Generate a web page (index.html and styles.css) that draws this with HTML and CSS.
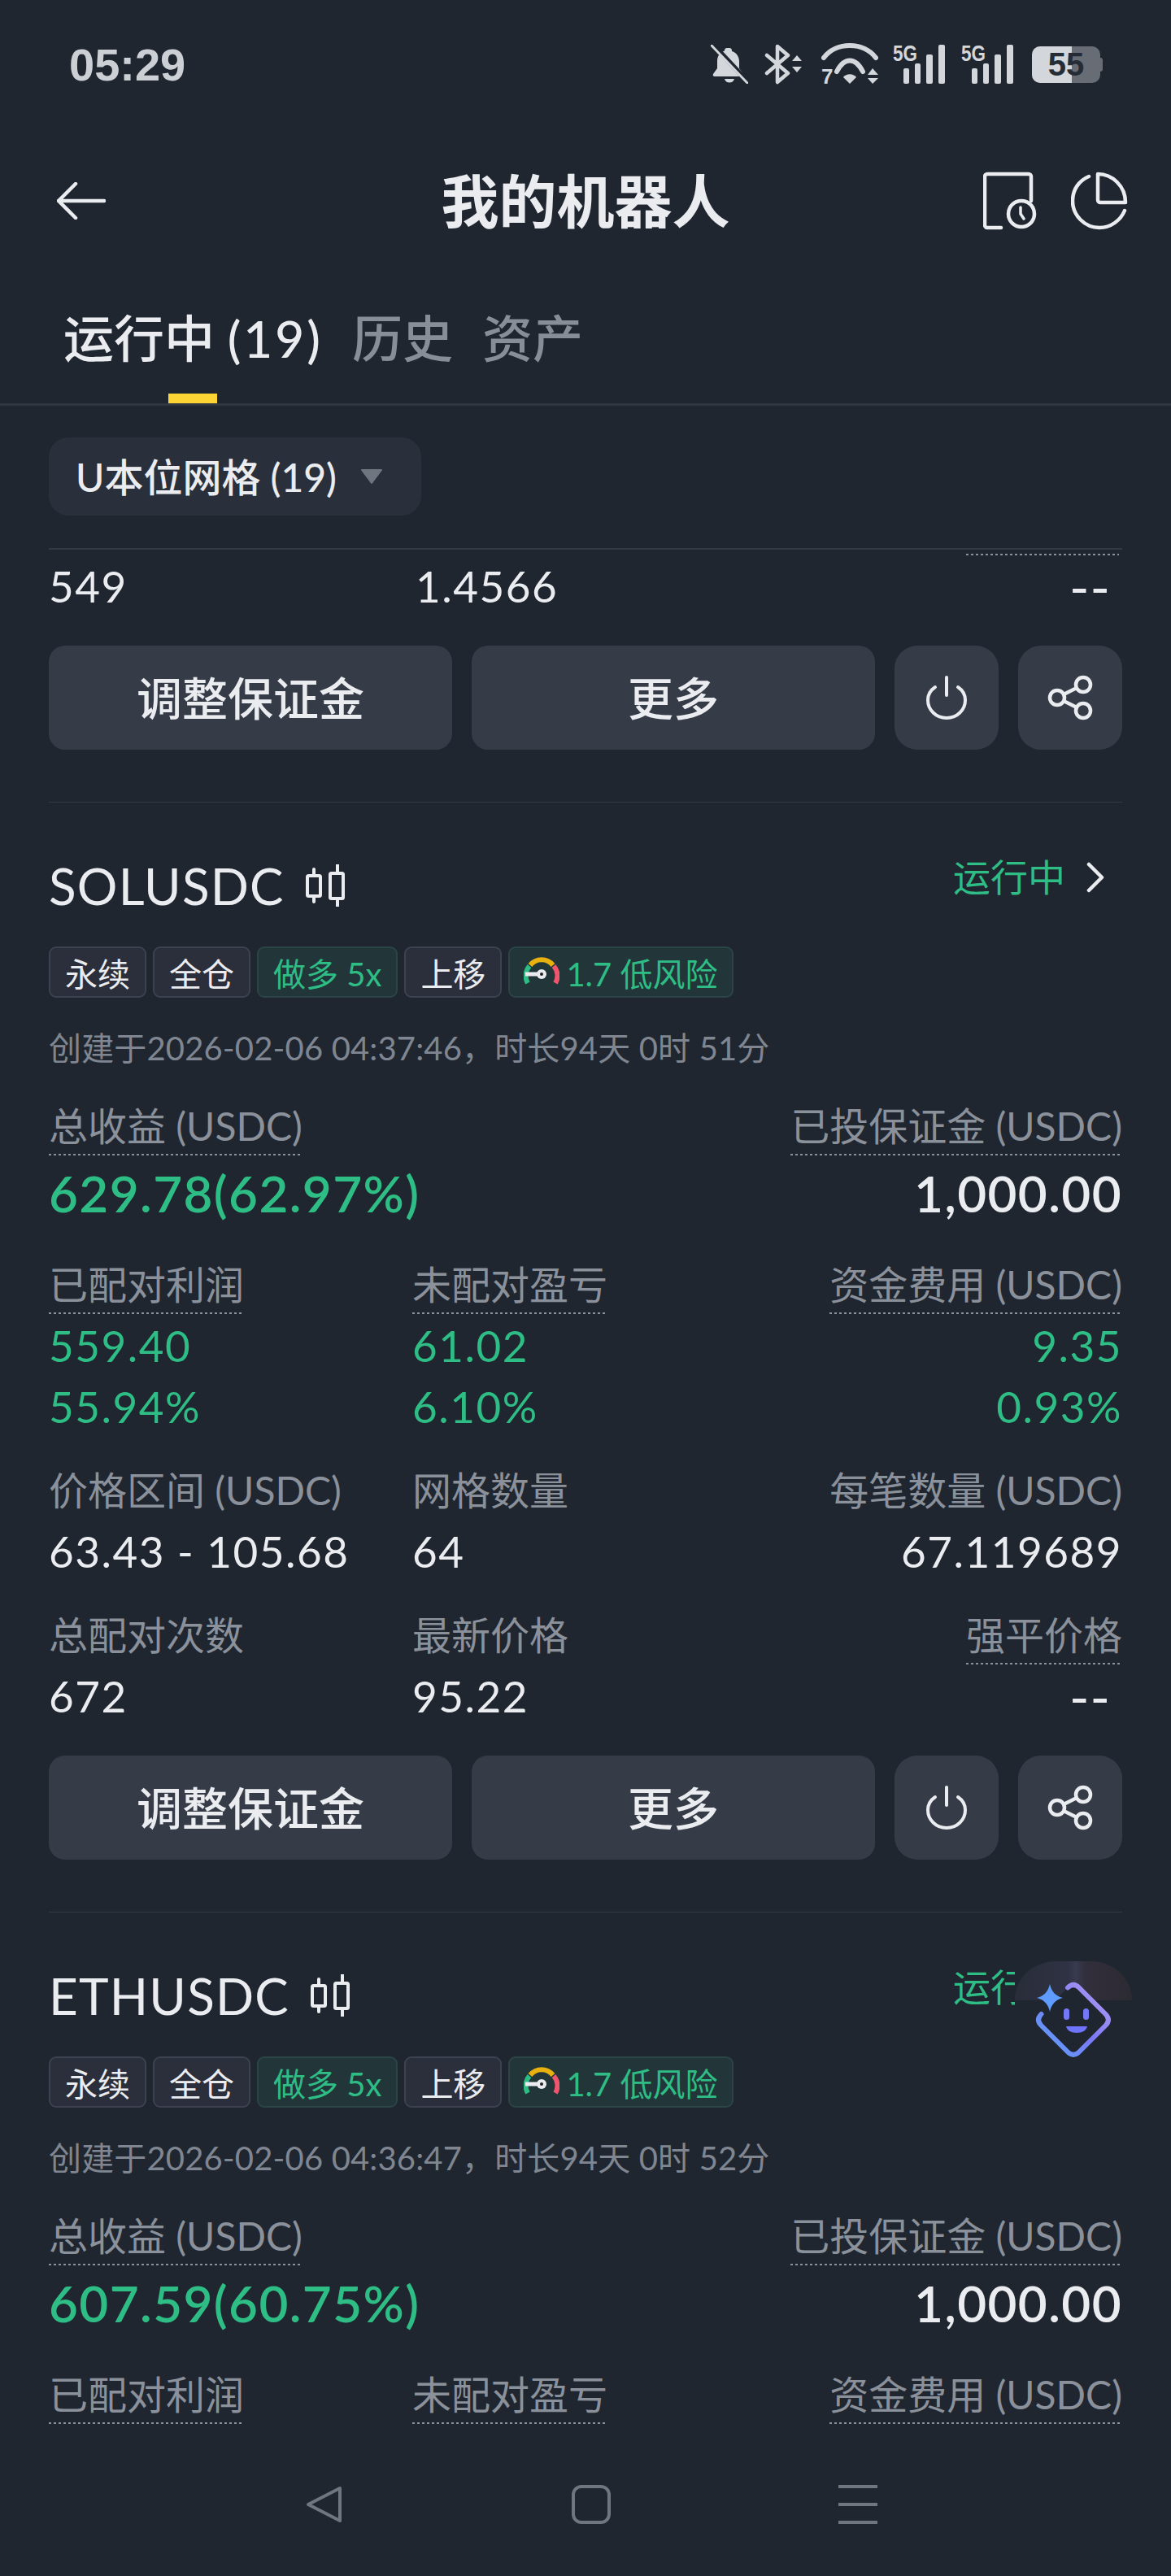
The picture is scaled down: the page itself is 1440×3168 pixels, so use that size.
FILE: index.html
```html
<!DOCTYPE html>
<html lang="zh">
<head>
<meta charset="utf-8">
<title>我的机器人</title>
<link rel="stylesheet" href="styles.css">
</head>
<body>
<div class="app">
  <div class="statusbar">
    <span class="time">05:29</span>
    <div class="sys-icons">
      <svg class="ic-bell" width="46" height="48" viewBox="0 0 46 48"><path d="M23 4c1.700 0 3 1.300 3 3v1c6 1.800 9 7 9 13v8l5 7c.8 1.300 0 3-1.600 3H4.600c-1.600 0-2.400-1.700-1.600-3l5-7v-9c0-6 3.500-11 9-12.500V7c0-1.700 1.300-3 3-3z" fill="#d3d6da"/><path d="M17 42h12c-.8 3-3 4.500-6 4.500s-5.200-1.500-6-4.500z" fill="#d3d6da"/><path d="M3 0l43 46" stroke="#1f2630" stroke-width="6"/><path d="M1 1l44 46" stroke="#d3d6da" stroke-width="3" stroke-linecap="round"/></svg>
      <svg class="ic-bt" width="48" height="50" viewBox="0 0 48 50"><path d="M3 14l26 22-13 11V3l13 11L3 36" fill="none" stroke="#d3d6da" stroke-width="4.500" stroke-linejoin="round" stroke-linecap="round"/><path d="M34 21l6-7 6 7zM34 28l6 7 6-7z" fill="#d3d6da"/></svg>
      <svg class="ic-wifi" width="70" height="62" viewBox="0 -6 70 62"><path d="M3 17C18-3 52-3 67 17" fill="none" stroke="#d3d6da" stroke-width="6" stroke-linecap="round"/><path d="M19 34C28 16 42 16 51 34" fill="none" stroke="#d3d6da" stroke-width="6" stroke-linecap="round"/><path d="M27 41c4-5 12-5 16 0l-8 8z" fill="#d3d6da"/><text class="wifi-7" x="0" y="49">7</text><path d="M57 38l6-8 7 8zM57 42l6 7 7-7z" fill="#d3d6da"/></svg>
      <svg class="ic-sig" width="64" height="62" viewBox="0 -6 64 62"><text class="sig-5g" x="0" y="21" textLength="30" lengthAdjust="spacingAndGlyphs">5G</text><rect x="13" y="30" width="7" height="19" rx="2"/><rect x="27" y="24" width="7" height="25" rx="2"/><rect x="41" y="13" width="8" height="36" rx="2"/><rect x="56" y="1" width="8" height="48" rx="2"/></svg>
      <svg class="ic-sig" width="64" height="62" viewBox="0 -6 64 62"><text class="sig-5g" x="0" y="21" textLength="30" lengthAdjust="spacingAndGlyphs">5G</text><rect x="13" y="30" width="7" height="19" rx="2"/><rect x="27" y="24" width="7" height="25" rx="2"/><rect x="41" y="13" width="8" height="36" rx="2"/><rect x="56" y="1" width="8" height="48" rx="2"/></svg>
      <div class="battery"><span class="battery-fill"></span><span class="battery-num">55</span><span class="battery-nub"></span></div>
    </div>
  </div>

  <header class="topbar">
    <svg class="ic-back" width="60" height="46" viewBox="0 0 60 46"><path d="M23 2L2 23l21 21M2 23h56" fill="none" stroke="#eaecf0" stroke-width="4.500" stroke-linecap="round" stroke-linejoin="round"/></svg>
    <h1 class="title">我的机器人</h1>
    <div class="top-actions">
      <svg width="66" height="72" viewBox="0 0 66 72"><path d="M22 69H5c-1.500 0-3-1.500-3-3V6c0-1.500 1.500-3 3-3h51c1.500 0 3 1.500 3 3v30" fill="none" stroke="#eaecf0" stroke-width="4.500" stroke-linecap="round"/><circle cx="47" cy="52" r="16" fill="none" stroke="#eaecf0" stroke-width="4.500"/><path d="M46 44v8l4 6" fill="none" stroke="#eaecf0" stroke-width="3.500" stroke-linecap="round"/></svg>
      <svg width="70" height="72" viewBox="0 0 70 72"><path d="M22 6C10 11 2 22 2 36c0 18 15 33 33 33 14 0 26-9 31-21" fill="none" stroke="#eaecf0" stroke-width="4.500" stroke-linecap="round"/><path d="M33 3c18 0 34 15 34 35H36c-1.500 0-3-1.500-3-3z" fill="none" stroke="#eaecf0" stroke-width="4.500" stroke-linejoin="round"/></svg>
    </div>
  </header>

  <nav class="tabs">
    <span class="tab tab-active">运行中 <span class="tab-count">(19)</span><i class="tab-bar"></i></span>
    <span class="tab">历史</span>
    <span class="tab">资产</span>
  </nav>

  <div class="filter">
    <div class="pill"><span class="pill-text">U本位网格 (19)</span><svg width="30" height="20" viewBox="0 0 30 20"><path d="M3 2h24l-12 16z" fill="#6f7680" stroke="#6f7680" stroke-width="2" stroke-linejoin="round"/></svg></div>
  </div>

  <main class="list">
    <section class="card card-partial">
      <div class="grid partial-row">
        <div class="val">549</div>
        <div class="val val-nudge">1.4566</div>
        <div class="cell-right"><div class="partial-dots"></div><div class="val val-dash">--</div></div>
      </div>
      <div class="actions">
        <button class="btn btn-text">调整保证金</button>
        <button class="btn btn-text">更多</button>
        <button class="btn btn-ic"><svg width="50" height="54" viewBox="0 0 50 54"><path d="M25 2v22" fill="none" stroke="#eaecf0" stroke-width="4" stroke-linecap="round"/><path d="M11 14C5 18 2 24 2 30c0 12 10 22 23 22s23-10 23-22c0-6-3-12-9-16" fill="none" stroke="#eaecf0" stroke-width="4" stroke-linecap="round"/></svg></button>
        <button class="btn btn-ic"><svg width="56" height="56" viewBox="0 0 56 56"><circle cx="12" cy="28" r="9" fill="none" stroke="#eaecf0" stroke-width="4.500"/><circle cx="44" cy="12" r="9" fill="none" stroke="#eaecf0" stroke-width="4.500"/><circle cx="44" cy="44" r="9" fill="none" stroke="#eaecf0" stroke-width="4.500"/><path d="M20 24l16-8M20 32l16 8" stroke="#eaecf0" stroke-width="4.500"/></svg></button>
      </div>
    </section>

    <section class="card">
      <div class="card-head">
        <div class="symbol">SOLUSDC<svg class="candle" width="48" height="52" viewBox="0 0 48 52"><path d="M10 6v8M10 39v7M39 0v11M39 42v10" stroke="#eaecf0" stroke-width="4" stroke-linecap="round"/><rect x="2" y="14" width="16" height="25" fill="none" stroke="#eaecf0" stroke-width="4" rx="1.500"/><rect x="30" y="11" width="16" height="31" fill="none" stroke="#eaecf0" stroke-width="4" rx="1.500"/></svg></div>
        <div class="state">运行中<svg width="22" height="38" viewBox="0 0 22 38"><path d="M3 3l16 16L3 35" fill="none" stroke="#eaecf0" stroke-width="4.500" stroke-linecap="round" stroke-linejoin="round"/></svg></div>
      </div>
      <div class="tags">
        <span class="tag">永续</span><span class="tag">全仓</span><span class="tag tag-g">做多 5x</span><span class="tag">上移</span>
        <span class="tag tag-g tag-risk"><svg width="44" height="38" viewBox="0 0 44 38"><path d="M5 32A18 18 0 0 1 7 11" fill="none" stroke="#2ebd85" stroke-width="6"/><path d="M8 10A18 18 0 0 1 36 10" fill="none" stroke="#e9b10f" stroke-width="6"/><path d="M37 11A18 18 0 0 1 39 32" fill="none" stroke="#f0556d" stroke-width="6"/><path d="M2 21h20" stroke="#eaecf0" stroke-width="5"/><circle cx="22" cy="21" r="6" fill="#eaecf0"/><circle cx="22" cy="21" r="2" fill="#222"/></svg>1.7 低风险</span>
      </div>
      <div class="created">创建于2026-02-06 04:37:46，时长94天 0时 51分</div>
      <div class="summary">
        <div><span class="lab">总收益 (USDC)</span><div class="big big-g">629.78(62.97%)</div></div>
        <div class="right"><span class="lab">已投保证金 (USDC)</span><div class="big">1,000.00</div></div>
      </div>
      <div class="grid row-a">
        <div><span class="lab">已配对利润</span><div class="val g">559.40</div><div class="val g">55.94%</div></div>
        <div><span class="lab">未配对盈亏</span><div class="val g">61.02</div><div class="val g">6.10%</div></div>
        <div class="right"><span class="lab">资金费用 (USDC)</span><div class="val g">9.35</div><div class="val g">0.93%</div></div>
      </div>
      <div class="grid row-b">
        <div><span class="lab lab-plain">价格区间 (USDC)</span><div class="val">63.43 - 105.68</div></div>
        <div><span class="lab lab-plain">网格数量</span><div class="val">64</div></div>
        <div class="right"><span class="lab lab-plain">每笔数量 (USDC)</span><div class="val">67.119689</div></div>
      </div>
      <div class="grid row-b">
        <div><span class="lab lab-plain">总配对次数</span><div class="val">672</div></div>
        <div><span class="lab lab-plain">最新价格</span><div class="val">95.22</div></div>
        <div class="right"><span class="lab">强平价格</span><div class="val val-dash">--</div></div>
      </div>
      <div class="actions">
        <button class="btn btn-text">调整保证金</button>
        <button class="btn btn-text">更多</button>
        <button class="btn btn-ic"><svg width="50" height="54" viewBox="0 0 50 54"><path d="M25 2v22" fill="none" stroke="#eaecf0" stroke-width="4" stroke-linecap="round"/><path d="M11 14C5 18 2 24 2 30c0 12 10 22 23 22s23-10 23-22c0-6-3-12-9-16" fill="none" stroke="#eaecf0" stroke-width="4" stroke-linecap="round"/></svg></button>
        <button class="btn btn-ic"><svg width="56" height="56" viewBox="0 0 56 56"><circle cx="12" cy="28" r="9" fill="none" stroke="#eaecf0" stroke-width="4.500"/><circle cx="44" cy="12" r="9" fill="none" stroke="#eaecf0" stroke-width="4.500"/><circle cx="44" cy="44" r="9" fill="none" stroke="#eaecf0" stroke-width="4.500"/><path d="M20 24l16-8M20 32l16 8" stroke="#eaecf0" stroke-width="4.500"/></svg></button>
      </div>
    </section>

    <section class="card">
      <div class="card-head">
        <div class="symbol">ETHUSDC<svg class="candle" width="48" height="52" viewBox="0 0 48 52"><path d="M10 6v8M10 39v7M39 0v11M39 42v10" stroke="#eaecf0" stroke-width="4" stroke-linecap="round"/><rect x="2" y="14" width="16" height="25" fill="none" stroke="#eaecf0" stroke-width="4" rx="1.500"/><rect x="30" y="11" width="16" height="31" fill="none" stroke="#eaecf0" stroke-width="4" rx="1.500"/></svg></div>
        <div class="state">运行中<svg width="22" height="38" viewBox="0 0 22 38"><path d="M3 3l16 16L3 35" fill="none" stroke="#eaecf0" stroke-width="4.500" stroke-linecap="round" stroke-linejoin="round"/></svg></div>
      </div>
      <div class="tags">
        <span class="tag">永续</span><span class="tag">全仓</span><span class="tag tag-g">做多 5x</span><span class="tag">上移</span>
        <span class="tag tag-g tag-risk"><svg width="44" height="38" viewBox="0 0 44 38"><path d="M5 32A18 18 0 0 1 7 11" fill="none" stroke="#2ebd85" stroke-width="6"/><path d="M8 10A18 18 0 0 1 36 10" fill="none" stroke="#e9b10f" stroke-width="6"/><path d="M37 11A18 18 0 0 1 39 32" fill="none" stroke="#f0556d" stroke-width="6"/><path d="M2 21h20" stroke="#eaecf0" stroke-width="5"/><circle cx="22" cy="21" r="6" fill="#eaecf0"/><circle cx="22" cy="21" r="2" fill="#222"/></svg>1.7 低风险</span>
      </div>
      <div class="created">创建于2026-02-06 04:36:47，时长94天 0时 52分</div>
      <div class="summary">
        <div><span class="lab">总收益 (USDC)</span><div class="big big-g">607.59(60.75%)</div></div>
        <div class="right"><span class="lab">已投保证金 (USDC)</span><div class="big">1,000.00</div></div>
      </div>
      <div class="grid row-a">
        <div><span class="lab">已配对利润</span></div>
        <div><span class="lab">未配对盈亏</span></div>
        <div class="right"><span class="lab">资金费用 (USDC)</span></div>
      </div>
    </section>
  </main>

  <footer class="navbar">
    <svg width="48" height="48" viewBox="0 0 48 48"><path d="M43 4L4 24l39 20z" fill="none" stroke="#6f7680" stroke-width="4" stroke-linejoin="round"/></svg>
    <svg width="48" height="48" viewBox="0 0 48 48"><rect x="2" y="2" width="44" height="44" rx="10" fill="none" stroke="#6f7680" stroke-width="4"/></svg>
    <svg width="48" height="48" viewBox="0 0 48 48"><path d="M0 2h48M0 24h48M0 46h48" stroke="#6f7680" stroke-width="4"/></svg>
  </footer>

  <svg class="assistant" width="144" height="128" viewBox="0 0 144 128">
    <defs>
      <linearGradient id="hat" x1="0" x2="1" y1="0" y2="0"><stop offset="0" stop-color="#292d39"/><stop offset=".45" stop-color="#2f3243"/><stop offset=".52" stop-color="#383a50"/><stop offset=".6" stop-color="#322f3c"/><stop offset="1" stop-color="#2c2a31"/></linearGradient>
      <linearGradient id="ring" x1="0" x2="1" y1="1" y2="0"><stop offset="0" stop-color="#58a6f8"/><stop offset=".5" stop-color="#7b78f6"/><stop offset="1" stop-color="#b8a0f2"/></linearGradient>
    </defs>
    <rect x="0" y="0" width="144" height="128" fill="#1f2630"/>
    <path d="M0 48C0 20 24 0 50 0h44c26 0 50 20 50 48H0z" fill="url(#hat)"/>
    <path d="M65 32.500Q72 25.500 79 32.500L111.500 65Q118.500 72 111.500 79L79 111.500Q72 118.500 65 111.500L32.500 79Q25.500 72 32.500 65z" fill="#1f2630"/>
    <path d="M65 32.500Q72 25.500 79 32.500L111.500 65Q118.500 72 111.500 79L79 111.500Q72 118.500 65 111.500L32.500 79Q25.500 72 32.500 65" fill="none" stroke="url(#ring)" stroke-width="6" stroke-linecap="round"/>
    <path d="M43 28c2 9 7 15 16 17-9 2-14 8-16 17-2-9-7-15-16-17 9-2 14-8 16-17z" fill="#5e9cff"/>
    <rect x="60" y="58" width="7" height="14" rx="3.500" fill="#7478f8"/>
    <rect x="84" y="58" width="7" height="14" rx="3.500" fill="#7478f8"/>
    <path d="M63 80h26c-1 5-6 8-13 8s-12-3-13-8z" fill="#6f74fa"/>
  </svg>
</div>
</body>
</html>
```

FILE: styles.css
```css
* { box-sizing: border-box; }
html, body { margin: 0; padding: 0; background: #1f2630; }
body {
  font-family: Lato, "Noto Sans CJK SC", sans-serif;
  color: #eaecf0;
}
.app {
  position: relative;
  width: 1440px;
  height: 3168px;
  display: flex;
  flex-direction: column;
  overflow: hidden;
  background: #1f2630;
}

/* status bar */
.statusbar {
  height: 158px;
  flex: none;
  display: flex;
  align-items: center;
  justify-content: space-between;
  padding: 0 87px 0 85px;
}
.time {
  font-family: "Liberation Sans", sans-serif;
  font-size: 56px;
  font-weight: 700;
  color: #ccd0d5;
}
.sys-icons { display: flex; align-items: center; gap: 20px; }
.sys-icons svg { display: block; }
.ic-bt { margin-right: 2px; }
.ic-wifi { margin-right: -2px; }
.ic-sig rect { fill: #d3d6da; }
.sig-5g {
  font-family: "Liberation Sans", sans-serif;
  font-weight: 700;
  font-size: 28px;
  fill: #d3d6da;
}
.wifi-7 {
  font-family: "Liberation Sans", sans-serif;
  font-size: 26px;
  font-weight: 700;
  fill: #d3d6da;
}
.battery {
  position: relative;
  width: 84px;
  height: 45px;
  display: flex;
  align-items: center;
  justify-content: center;
  background: #686d75;
  border-radius: 10px;
  margin-left: 3px;
}
.battery-fill {
  position: absolute;
  left: 0;
  top: 0;
  bottom: 0;
  width: 49px;
  background: #d3d6da;
  border-radius: 10px 0 0 10px;
}
.battery-num {
  position: relative;
  font-family: "Liberation Sans", sans-serif;
  font-weight: 700;
  font-size: 40px;
  line-height: 45px;
  color: #262c35;
}
.battery-nub {
  position: absolute;
  right: -3px;
  top: 14px;
  width: 3px;
  height: 17px;
  background: #686d75;
  border-radius: 0 3px 3px 0;
}

/* top bar */
.topbar {
  position: relative;
  flex: none;
  height: 178px;
  display: flex;
  align-items: center;
  justify-content: space-between;
  padding: 0 53px 0 70px;
}
.title {
  position: absolute;
  left: 0;
  right: 0;
  margin: 0;
  text-align: center;
  font-size: 71px;
  font-weight: 700;
  line-height: 80px;
  color: #eaecf0;
  pointer-events: none;
}
.top-actions { display: flex; align-items: center; gap: 42px; }

/* tabs */
.tabs {
  flex: none;
  height: 163px;
  display: flex;
  gap: 36px;
  padding: 40px 0 0 78px;
  border-bottom: 3px solid #2f3640;
}
.tab {
  position: relative;
  font-size: 62px;
  font-weight: 500;
  line-height: 80px;
  height: 120px;
  color: #878e98;
}
.tab-count { letter-spacing: 3px; }
.tab-active { color: #eaecf0; }
.tab-bar {
  position: absolute;
  left: 129px;
  bottom: 0;
  width: 60px;
  height: 12px;
  background: #fcd535;
}

/* filter */
.filter { flex: none; height: 175px; padding: 39px 60px 0; }
.pill {
  width: 458px;
  height: 96px;
  border-radius: 24px;
  background: #2a303b;
  display: flex;
  align-items: center;
  gap: 28px;
  padding-left: 33px;
  font-size: 48px;
  font-weight: 500;
}
.pill-text { margin-bottom: 5px; }

/* list */
.list { flex: 1 1 0; min-height: 0; overflow: hidden; padding: 0 60px; }
.list > .card:first-child { border-top: 2px solid #333a45; }
.card { border-bottom: 1px solid #333a45; padding-bottom: 64px; }
.grid {
  display: grid;
  grid-template-columns: 447px 1fr auto;
}
.partial-row { height: 118px; }
.partial-row .val { padding-top: 7px; }
.cell-right { text-align: right; }
.partial-dots {
  width: 188px;
  height: 2px;
  margin: 5px 4px 0 auto;
  background: repeating-linear-gradient(90deg, #8b919b 0 3px, transparent 3px 6px);
}
.partial-row .val-dash { padding-top: 0; }
.val-nudge { margin-left: 4px; }

.val { font-size: 53px; line-height: 75px; letter-spacing: 1.500px; }
.val.g { color: #2ebd85; }
.val-dash { font-size: 66px; padding-right: 14px; letter-spacing: 1px; }
.g { color: #2ebd85; }
.right { text-align: right; }

.actions {
  display: grid;
  grid-template-columns: 496px 496px 128px 128px;
  gap: 24px;
}
.btn {
  height: 128px;
  border: 0;
  border-radius: 20px;
  background: #353c48;
  color: #eaecf0;
  font-family: inherit;
  font-size: 56px;
  font-weight: 500;
  display: flex;
  align-items: center;
  justify-content: center;
  padding: 0;
}
.btn-text { padding-bottom: 6px; }
.btn-ic { border-radius: 28px; }

.card-head {
  display: flex;
  justify-content: space-between;
  align-items: flex-start;
  padding: 72px 22px 0 0;
}
.symbol {
  display: flex;
  align-items: center;
  gap: 26px;
  font-size: 62px;
  line-height: 60px;
  height: 60px;
  letter-spacing: 1.200px;
}
.state {
  display: flex;
  align-items: center;
  gap: 26px;
  font-size: 46px;
  line-height: 40px;
  color: #2ebd85;
}
.tags { display: flex; gap: 8px; margin-top: 45px; height: 63px; }
.tag {
  display: flex;
  align-items: center;
  height: 63px;
  padding: 0 18px;
  border: 2px solid #3c424f;
  border-radius: 9px;
  background: #2a2f3b;
  font-size: 40px;
}
.tag-g { color: #2ebd85; background: #22363a; border-color: #2b4446; }
.tag-risk { gap: 8px; padding-left: 17px; }
.created {
  margin-top: 40px;
  font-size: 40px;
  line-height: 44px;
  letter-spacing: .15px;
  color: #7f8691;
}
.summary { display: flex; justify-content: space-between; margin-top: 44px; }
.lab {
  display: inline-block;
  height: 66px;
  font-size: 48px;
  line-height: 60px;
  color: #8b919b;
  background: repeating-linear-gradient(90deg, #8b919b 0 3px, transparent 3px 6px) left bottom / 100% 2px no-repeat;
}
.lab-plain { background: none; }
.big { font-size: 62px; line-height: 74px; margin-top: 9px; font-weight: 600; letter-spacing: 1.400px; }
.big-g { color: #2ebd85; }
.row-a { margin-top: 46px; }
.row-a .lab + .val { margin-top: 1px; }
.row-b { margin-top: 36px; }
.row-b + .actions { margin-top: 36px; }
.row-b .lab + .val { margin-top: 1px; }

/* nav */
.navbar {
  flex: none;
  height: 178px;
  display: grid;
  grid-template-columns: 48px 48px 48px;
  justify-content: center;
  gap: 280px;
  padding: 66px 0 0 14px;
  background: #1f2630;
}
.navbar svg { display: block; }

/* floating assistant */
.assistant { position: absolute; left: 1248px; top: 2412px; }
```
